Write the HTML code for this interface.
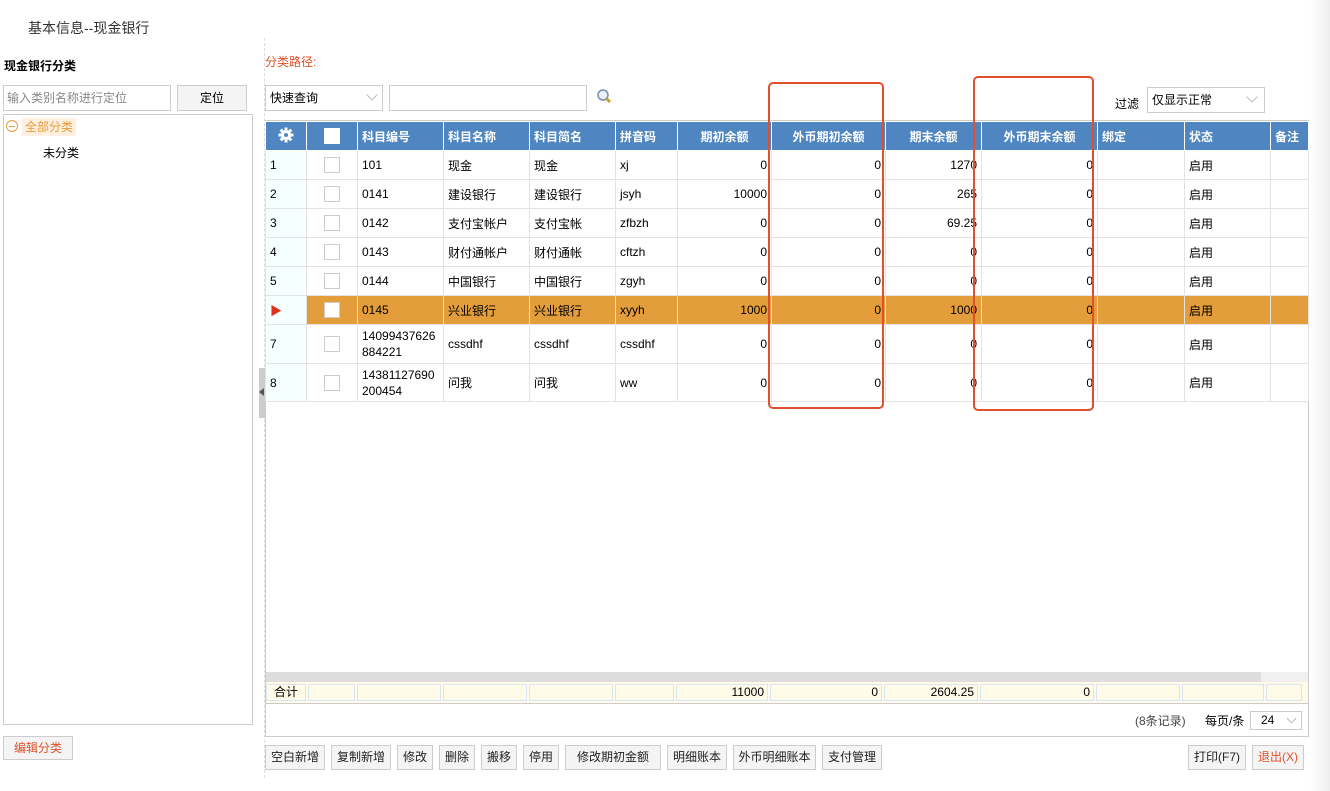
<!DOCTYPE html>
<html><head><meta charset="utf-8"><style>
*{box-sizing:border-box;margin:0;padding:0}
body{width:1330px;height:791px;background:#fff;font-family:"Liberation Sans","Noto Sans CJK SC",sans-serif;font-size:12px;color:#000;position:relative;overflow:hidden}
.a{position:absolute}
.btn{position:absolute;top:745px;height:25px;border:1px solid #ccc;background:#f4f4f4;font-size:12px;text-align:center;line-height:23px;color:#222}
table{border-collapse:collapse;table-layout:fixed;position:absolute;left:265px;top:121px}
td{border:1px solid #e3e3e3;padding:0 4px;white-space:nowrap;overflow:hidden}
th{background:#4f86c1;color:#fff;border:1px solid #fff;font-weight:bold;text-align:left;padding:0 4px;height:29px;font-size:12px}
.r{text-align:right}
.cb{display:inline-block;width:16px;height:16px;border:1px solid #ccc;background:#fff;vertical-align:middle}
.n{background:#f5fffe}
tr.h td{background:#e39d3a;border-color:#e3e3e3}
.box{position:absolute;border:2.5px solid #e0502a;border-radius:5px}
</style></head><body>
<div class="a" style="left:1310px;top:0;width:20px;height:791px;background:linear-gradient(90deg,#fff,#eee)"></div>
<div class="a" style="left:28px;top:18px;font-size:14px;color:#333">基本信息--现金银行</div>
<div class="a" style="left:4px;top:57px;font-size:12px;font-weight:bold">现金银行分类</div>
<div class="a" style="left:3px;top:85px;width:168px;height:26px;border:1px solid #ccc;color:#888;padding-left:3px;line-height:24px">输入类别名称进行定位</div>
<div class="a" style="left:177px;top:85px;width:70px;height:26px;border:1px solid #ccc;background:#f4f4f4;text-align:center;line-height:24px">定位</div>
<div class="a" style="left:3px;top:114px;width:250px;height:611px;border:1px solid #ccc"></div>
<div class="a" style="left:6px;top:120px;width:12px;height:12px;border:1px solid #e89a3a;border-radius:50%"></div>
<div class="a" style="left:9px;top:125.5px;width:6px;height:1px;background:#e89a3a"></div>
<div class="a" style="left:22px;top:118px;padding:0 3px;background:#fdf0e0;color:#e89a3a;line-height:18px">全部分类</div>
<div class="a" style="left:43px;top:144px">未分类</div>
<div class="a" style="left:3px;top:736px;width:70px;height:24px;border:1px solid #ccc;background:#f4f4f4;color:#e0502a;text-align:center;line-height:22px">编辑分类</div>
<div class="a" style="left:264px;top:38px;width:0;height:740px;border-left:1px dashed #ddd"></div>
<div class="a" style="left:259px;top:368px;width:6px;height:50px;background:#ccc"></div>
<div class="a" style="left:259px;top:388px;width:0;height:0;border:4px solid transparent;border-right:5px solid #555;border-left:0"></div>
<div class="a" style="left:265px;top:53px;color:#e0502a">分类路径:</div>
<div class="a" style="left:265px;top:85px;width:118px;height:26px;border:1px solid #ccc;padding-left:4px;line-height:24px">快速查询<span style="position:absolute;right:6px;top:5px;width:8px;height:8px;border-right:1px solid #bbb;border-bottom:1px solid #bbb;transform:rotate(45deg)"></span></div>
<div class="a" style="left:389px;top:85px;width:198px;height:26px;border:1px solid #ccc"></div>
<svg class="a" style="left:596px;top:88px" width="18" height="18"><circle cx="7" cy="7" r="5" fill="#e8f0fa" stroke="#7a8ea8" stroke-width="1.5"/><line x1="10.5" y1="10.5" x2="14" y2="14" stroke="#c9a030" stroke-width="3"/></svg>
<div class="a" style="left:1115px;top:95px">过滤</div>
<div class="a" style="left:1147px;top:87px;width:118px;height:26px;border:1px solid #ccc;padding-left:4px;line-height:24px">仅显示正常<span style="position:absolute;right:8px;top:5px;width:8px;height:8px;border-right:1px solid #bbb;border-bottom:1px solid #bbb;transform:rotate(45deg)"></span></div>
<div class="a" style="left:265px;top:120px;width:1044px;height:617px;border:1px solid #ccc"></div>
<table>
<colgroup><col style="width:41px"><col style="width:51px"><col style="width:86px"><col style="width:86px"><col style="width:86px"><col style="width:62px"><col style="width:94px"><col style="width:114px"><col style="width:96px"><col style="width:116px"><col style="width:87px"><col style="width:86px"><col style="width:38px"></colgroup>
<tr><th style="text-align:center"><svg width="16" height="16" viewBox="0 0 16 16"><g fill="#fff"><circle cx="8" cy="8" r="5"/><rect x="6.5" y="0.5" width="3" height="15"/><rect x="0.5" y="6.5" width="15" height="3"/><rect x="6.5" y="0.5" width="3" height="15" transform="rotate(45 8 8)"/><rect x="6.5" y="0.5" width="3" height="15" transform="rotate(-45 8 8)"/></g><circle cx="8" cy="8" r="2" fill="#4f86c1"/></svg></th><th style="text-align:center"><span class="cb" style="border:none"></span></th><th>科目编号</th><th>科目名称</th><th>科目简名</th><th>拼音码</th><th style="text-align:center">期初余额</th><th style="text-align:center">外币期初余额</th><th style="text-align:center">期末余额</th><th style="text-align:center">外币期末余额</th><th>绑定</th><th>状态</th><th>备注</th></tr>
<tr style="height:29px"><td class="n">1</td><td style="text-align:center"><span class="cb"></span></td><td>101</td><td>现金</td><td>现金</td><td>xj</td><td class="r">0</td><td class="r">0</td><td class="r">1270</td><td class="r">0</td><td></td><td>启用</td><td></td></tr>
<tr style="height:29px"><td class="n">2</td><td style="text-align:center"><span class="cb"></span></td><td>0141</td><td>建设银行</td><td>建设银行</td><td>jsyh</td><td class="r">10000</td><td class="r">0</td><td class="r">265</td><td class="r">0</td><td></td><td>启用</td><td></td></tr>
<tr style="height:29px"><td class="n">3</td><td style="text-align:center"><span class="cb"></span></td><td>0142</td><td>支付宝帐户</td><td>支付宝帐</td><td>zfbzh</td><td class="r">0</td><td class="r">0</td><td class="r">69.25</td><td class="r">0</td><td></td><td>启用</td><td></td></tr>
<tr style="height:29px"><td class="n">4</td><td style="text-align:center"><span class="cb"></span></td><td>0143</td><td>财付通帐户</td><td>财付通帐</td><td>cftzh</td><td class="r">0</td><td class="r">0</td><td class="r">0</td><td class="r">0</td><td></td><td>启用</td><td></td></tr>
<tr style="height:29px"><td class="n">5</td><td style="text-align:center"><span class="cb"></span></td><td>0144</td><td>中国银行</td><td>中国银行</td><td>zgyh</td><td class="r">0</td><td class="r">0</td><td class="r">0</td><td class="r">0</td><td></td><td>启用</td><td></td></tr>
<tr class="h" style="height:29px"><td class="n" style="background:#f5fffe;color:#e03020">&#9654;</td><td style="text-align:center"><span class="cb"></span></td><td>0145</td><td>兴业银行</td><td>兴业银行</td><td>xyyh</td><td class="r">1000</td><td class="r">0</td><td class="r">1000</td><td class="r">0</td><td></td><td>启用</td><td></td></tr>
<tr style="height:39px"><td class="n">7</td><td style="text-align:center"><span class="cb"></span></td><td style="line-height:16px">14099437626<br>884221</td><td>cssdhf</td><td>cssdhf</td><td>cssdhf</td><td class="r">0</td><td class="r">0</td><td class="r">0</td><td class="r">0</td><td></td><td>启用</td><td></td></tr>
<tr style="height:38px"><td class="n">8</td><td style="text-align:center"><span class="cb"></span></td><td style="line-height:16px">14381127690<br>200454</td><td>问我</td><td>问我</td><td>ww</td><td class="r">0</td><td class="r">0</td><td class="r">0</td><td class="r">0</td><td></td><td>启用</td><td></td></tr>
</table>
<div class="a" style="left:266px;top:672px;width:1042px;height:10px;background:#f0f0f0"></div>
<div class="a" style="left:266px;top:672px;width:995px;height:10px;background:#ddd"></div>
<div class="a" style="left:266px;top:682px;width:1042px;height:22px;background:#fffbe8;border-bottom:1px solid #ccc"></div>
<div class="a" style="left:266px;top:684px;font-size:12px;display:flex;gap:2px">
<div style="width:40px;height:17px;border:1px solid #d6e6f5;text-align:center;line-height:15px">合计</div>
<div style="width:47px;height:17px;border:1px solid #d6e6f5"></div>
<div style="width:84px;height:17px;border:1px solid #d6e6f5"></div>
<div style="width:84px;height:17px;border:1px solid #d6e6f5"></div>
<div style="width:84px;height:17px;border:1px solid #d6e6f5"></div>
<div style="width:59px;height:17px;border:1px solid #d6e6f5"></div>
<div style="width:92px;height:17px;border:1px solid #d6e6f5;text-align:right;padding-right:3px;line-height:15px">11000</div>
<div style="width:112px;height:17px;border:1px solid #d6e6f5;text-align:right;padding-right:3px;line-height:15px">0</div>
<div style="width:94px;height:17px;border:1px solid #d6e6f5;text-align:right;padding-right:3px;line-height:15px">2604.25</div>
<div style="width:114px;height:17px;border:1px solid #d6e6f5;text-align:right;padding-right:3px;line-height:15px">0</div>
<div style="width:84px;height:17px;border:1px solid #d6e6f5"></div>
<div style="width:82px;height:17px;border:1px solid #d6e6f5"></div>
<div style="width:36px;height:17px;border:1px solid #d6e6f5"></div>
</div>
<div class="a" style="left:1135px;top:712px;color:#444">(8条记录)</div>
<div class="a" style="left:1205px;top:712px">每页/条</div>
<div class="a" style="left:1250px;top:711px;width:52px;height:19px;border:1px solid #ccc;padding-left:10px;line-height:17px">24<span style="position:absolute;right:6px;top:3px;width:7px;height:7px;border-right:1px solid #bbb;border-bottom:1px solid #bbb;transform:rotate(45deg)"></span></div>
<div class="btn" style="left:265px;width:60px">空白新增</div>
<div class="btn" style="left:331px;width:60px">复制新增</div>
<div class="btn" style="left:397px;width:36px">修改</div>
<div class="btn" style="left:439px;width:36px">删除</div>
<div class="btn" style="left:481px;width:36px">搬移</div>
<div class="btn" style="left:523px;width:36px">停用</div>
<div class="btn" style="left:565px;width:96px">修改期初金额</div>
<div class="btn" style="left:667px;width:60px">明细账本</div>
<div class="btn" style="left:733px;width:83px">外币明细账本</div>
<div class="btn" style="left:822px;width:60px">支付管理</div>
<div class="btn" style="left:1188px;width:58px">打印(F7)</div>
<div class="btn" style="left:1252px;width:52px;color:#e0502a">退出(X)</div>
<div class="box" style="left:768px;top:82px;width:116px;height:327px"></div>
<div class="box" style="left:973px;top:76px;width:121px;height:335px"></div>
</body></html>
